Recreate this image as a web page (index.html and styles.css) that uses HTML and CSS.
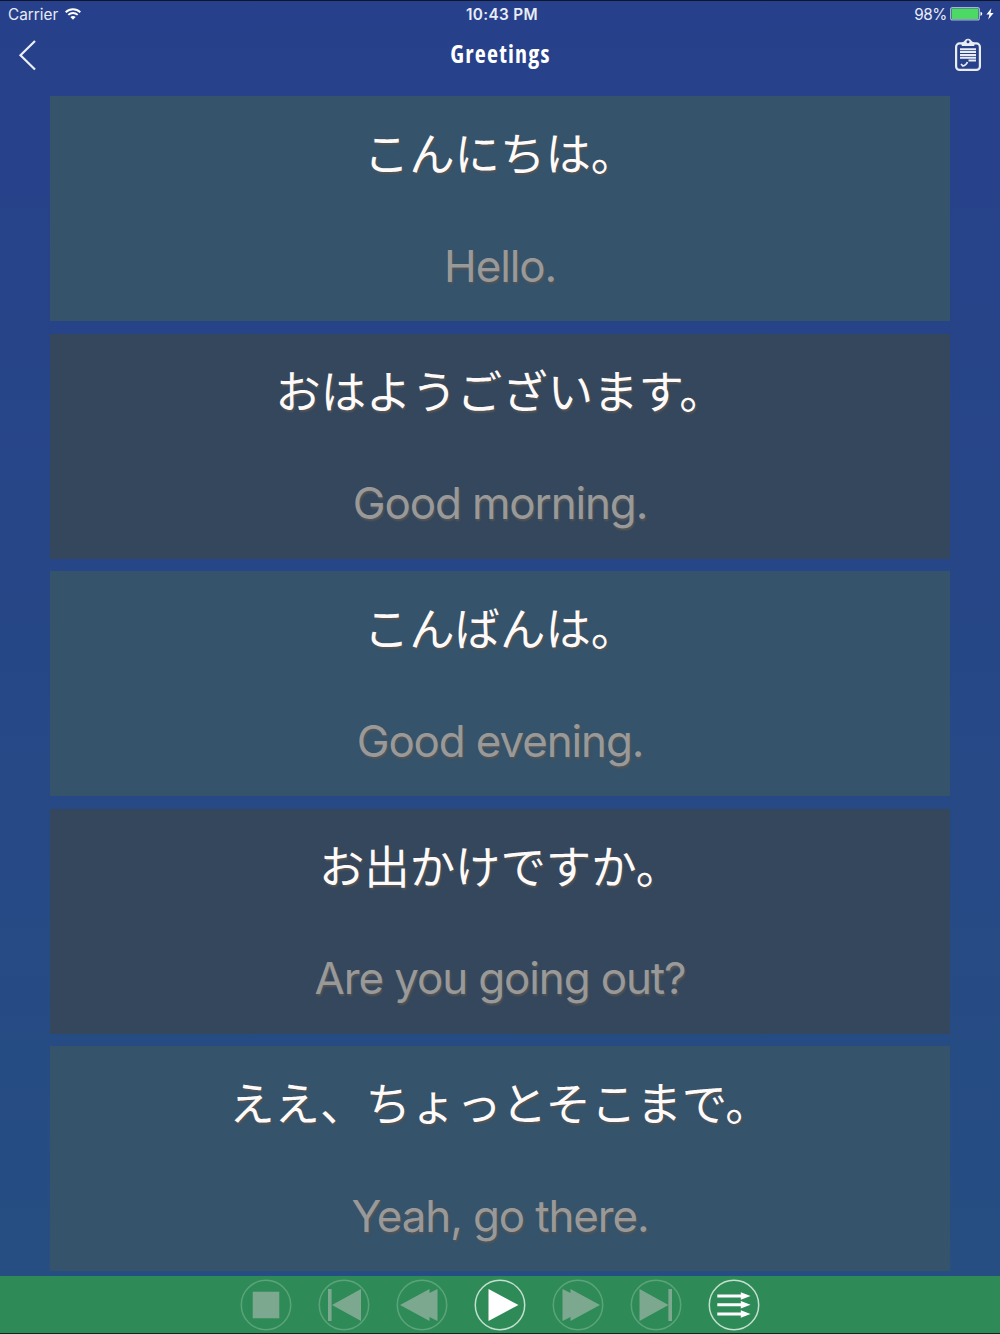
FILE: index.html
```html
<!DOCTYPE html>
<html lang="en">
<head>
  <meta charset="UTF-8" />
  <meta name="viewport" content="width=device-width, initial-scale=1" />
  <title>Greetings</title>
  <link rel="stylesheet" href="styles.css">
</head>
<body>
  <!-- Status bar -->
  <div class="status">
    <div class="status-left">
      <span>Carrier</span>
      <svg class="wifi" width="16" height="12" viewBox="0 0 16 12" fill="none" stroke="#fff" stroke-width="1.9">
        <path d="M.7 4.2C4.9.2 11.1.2 15.3 4.2" />
        <path d="M3.3 6.9c2.7-2.5 6.7-2.5 9.4 0" />
        <path d="M5.4 9.1c1.5-1.4 3.7-1.4 5.2 0L8 11.8z" fill="#fff" stroke="none" />
      </svg>
    </div>
    <div class="time">10:43 PM</div>
    <div class="status-right">
      <span class="percent">98%</span>
      <svg class="battery" width="33" height="14" viewBox="0 0 33 14">
        <rect x=".6" y=".6" width="28.8" height="12.3" rx="2" fill="none" stroke="#a9b4d3" stroke-width="1.1" />
        <rect x="1.6" y="1.6" width="26.8" height="10.3" rx="1" fill="#4cd964" />
        <path d="M30.5 4.7q1.8.6 1.8 2.1t-1.8 2.1z" fill="#fff" />
      </svg>
      <svg width="8" height="12" viewBox="0 0 8 12"><path d="M5.4.3.4 6.6h3L2.2 11.6 7.6 5.1H4.5z" fill="#fff" /></svg>
    </div>
  </div>

  <!-- Title bar -->
  <div class="nav">
    <button class="nav-btn">
      <svg width="20" height="32" viewBox="0 0 20 32"><path d="M17 2 2.5 16.3 17 30.5" fill="none" stroke="#eef0f7" stroke-width="2.2" /></svg>
    </button>
    <h1>Greetings</h1>
    <button class="nav-btn">
      <svg width="28" height="34" viewBox="0 0 28 34" fill="none" stroke="#e9ecf5">
        <rect x="2.1" y="5.4" width="23.8" height="26.5" rx="3.5" stroke-width="2.2" />
        <path d="M8 7.5V5.8q0-1.8 2.4-1.8a3.7 3.7 0 0 1 7.2 0Q20 4 20 5.8v1.7z" fill="#e9ecf5" stroke-width="1" />
        <circle cx="14" cy="3.8" r="1.5" fill="#27408b" stroke="none" />
        <path d="M6 11.3h16M6 14.1h16M6 16.9h16M6 19.7h16M14.5 22.4H22" stroke-width="2" />
        <path d="m7 26 2 2q3-.5 4.5-4" stroke-width="1.7" />
      </svg>
    </button>
  </div>

  <!-- Phrases -->
  <div class="list">
    <div class="card">
      <p class="ja" lang="ja">こんにちは。</p>
      <p class="en">Hello.</p>
    </div>
    <div class="card dark">
      <p class="ja" lang="ja">おはようございます。</p>
      <p class="en">Good morning.</p>
    </div>
    <div class="card">
      <p class="ja" lang="ja">こんばんは。</p>
      <p class="en">Good evening.</p>
    </div>
    <div class="card dark">
      <p class="ja" lang="ja">お出かけですか。</p>
      <p class="en">Are you going out?</p>
    </div>
    <div class="card">
      <p class="ja" lang="ja">ええ、ちょっとそこまで。</p>
      <p class="en">Yeah, go there.</p>
    </div>
  </div>

  <!-- Player -->
  <div class="player">
    <button class="ctrl off"><svg viewBox="0 0 52 52"><circle cx="26" cy="26" r="24.7" /><path d="M12.7 12.7h26.6v26.6H12.7z" /></svg></button>
    <button class="ctrl off"><svg viewBox="0 0 52 52"><circle cx="26" cy="26" r="24.7" /><path d="M10 10h3.6v32H10zM43 10v32L14 26z" /></svg></button>
    <button class="ctrl off"><svg viewBox="0 0 52 52"><circle cx="26" cy="26" r="24.7" /><path d="M4 26 33.5 10v4L41.5 10v32l-8-4v4z" /></svg></button>
    <button class="ctrl"><svg viewBox="0 0 52 52"><circle cx="26" cy="26" r="24.7" /><path d="M14.5 10v32L44.5 26z" /></svg></button>
    <button class="ctrl off"><svg viewBox="0 0 52 52"><circle cx="26" cy="26" r="24.7" /><path d="M48 26 18.5 10v4L10.5 10v32l8-4v4z" /></svg></button>
    <button class="ctrl off"><svg viewBox="0 0 52 52"><circle cx="26" cy="26" r="24.7" /><path d="M38.400 10H42v32h-3.600zM9.500 10v32L38.500 26z" /></svg></button>
    <button class="ctrl"><svg viewBox="0 0 52 52"><circle cx="26" cy="26" r="24.7" /><path d="M9.300 15.500h23.500v-2.200l9.700 3.700-9.700 3.700v-2.200H9.300zM9.300 24.200h23.500V22l9.700 3.700-9.700 3.700v-2.200H9.300zM9.300 33.500h23.500v-2.200l9.700 3.700-9.700 3.700v-2.200H9.300z" /></svg></button>
  </div>
</body>
</html>
```
FILE: styles.css
```css
* {
  box-sizing: border-box;
}

body {
  font-family: Inter, "Noto Sans CJK JP", sans-serif;
  background: linear-gradient(#27408b, #264f82);
  color: #fff;
  margin: 0;
  height: 1334px;
  overflow: hidden;
  display: flex;
  flex-direction: column;
  border-top: 1px solid #10152b;
  border-bottom: 1px solid #12241b;
}

button {
  background: none;
  border: 0;
  padding: 0;
  cursor: pointer;
}

svg {
  display: block;
}

.status {
  display: grid;
  grid-template-columns: 1fr auto 1fr;
  align-items: center;
  height: 26px;
  padding: 0 6px 0 8px;
  font-size: 15.3px;
  color: #e9ecf5;
}

.status-left,
.status-right {
  display: flex;
  align-items: center;
}

.status-left {
  gap: 7px;
}

.status-right {
  justify-content: flex-end;
  gap: 3px;
}

.percent {
  letter-spacing: -0.4px;
}

.time {
  font-weight: 600;
  font-size: 15.3px;
  letter-spacing: 0.35px;
  padding-left: 2px;
}

.nav {
  display: flex;
  justify-content: space-between;
  align-items: center;
  height: 56px;
  padding: 0 18px;
}

.nav-btn {
  width: 28px;
}

.nav-btn:last-child {
  display: flex;
  justify-content: flex-end;
}

h1 {
  font-family: "Open Sans", sans-serif;
  font-size: 24px;
  font-weight: 700;
  font-stretch: 75%;
  letter-spacing: 1.2px;
  line-height: 30px;
  margin: 0 0 2px 1px;
}

.list {
  flex: 1;
  min-height: 0;
  overflow: hidden;
  display: flex;
  flex-direction: column;
  gap: 12.5px;
  padding: 13.3px 50px 0;
}

.card {
  flex: 0 0 225px;
  background: #35536b;
  text-align: center;
}

.card.dark {
  background: #35475c;
}

.card p {
  margin: 0;
}

.card .ja {
  height: 112.5px;
  line-height: 110px;
  font-family: "Noto Sans CJK JP", sans-serif;
  font-size: 45.4px;
  color: #fffafa;
  text-shadow: 1px 2px 2px #555;
}

.card .en {
  height: 112.5px;
  line-height: 115px;
  font-size: 44px;
  letter-spacing: -1.15px;
  color: #999;
  text-shadow: 1px 2px 2px #555;
}

.player {
  flex: 0 0 57px;
  display: flex;
  justify-content: center;
  align-items: center;
  gap: 26px;
  background: #2e8b57;
}

.ctrl {
  width: 52px;
  height: 52px;
}

.ctrl circle {
  fill: none;
  stroke: #c3dfcf;
  stroke-width: 1.5;
}

.ctrl path {
  fill: #fff;
}

.ctrl.off circle {
  stroke: #5ca37b;
}

.ctrl.off path {
  fill: #7ba88e;
}
```
